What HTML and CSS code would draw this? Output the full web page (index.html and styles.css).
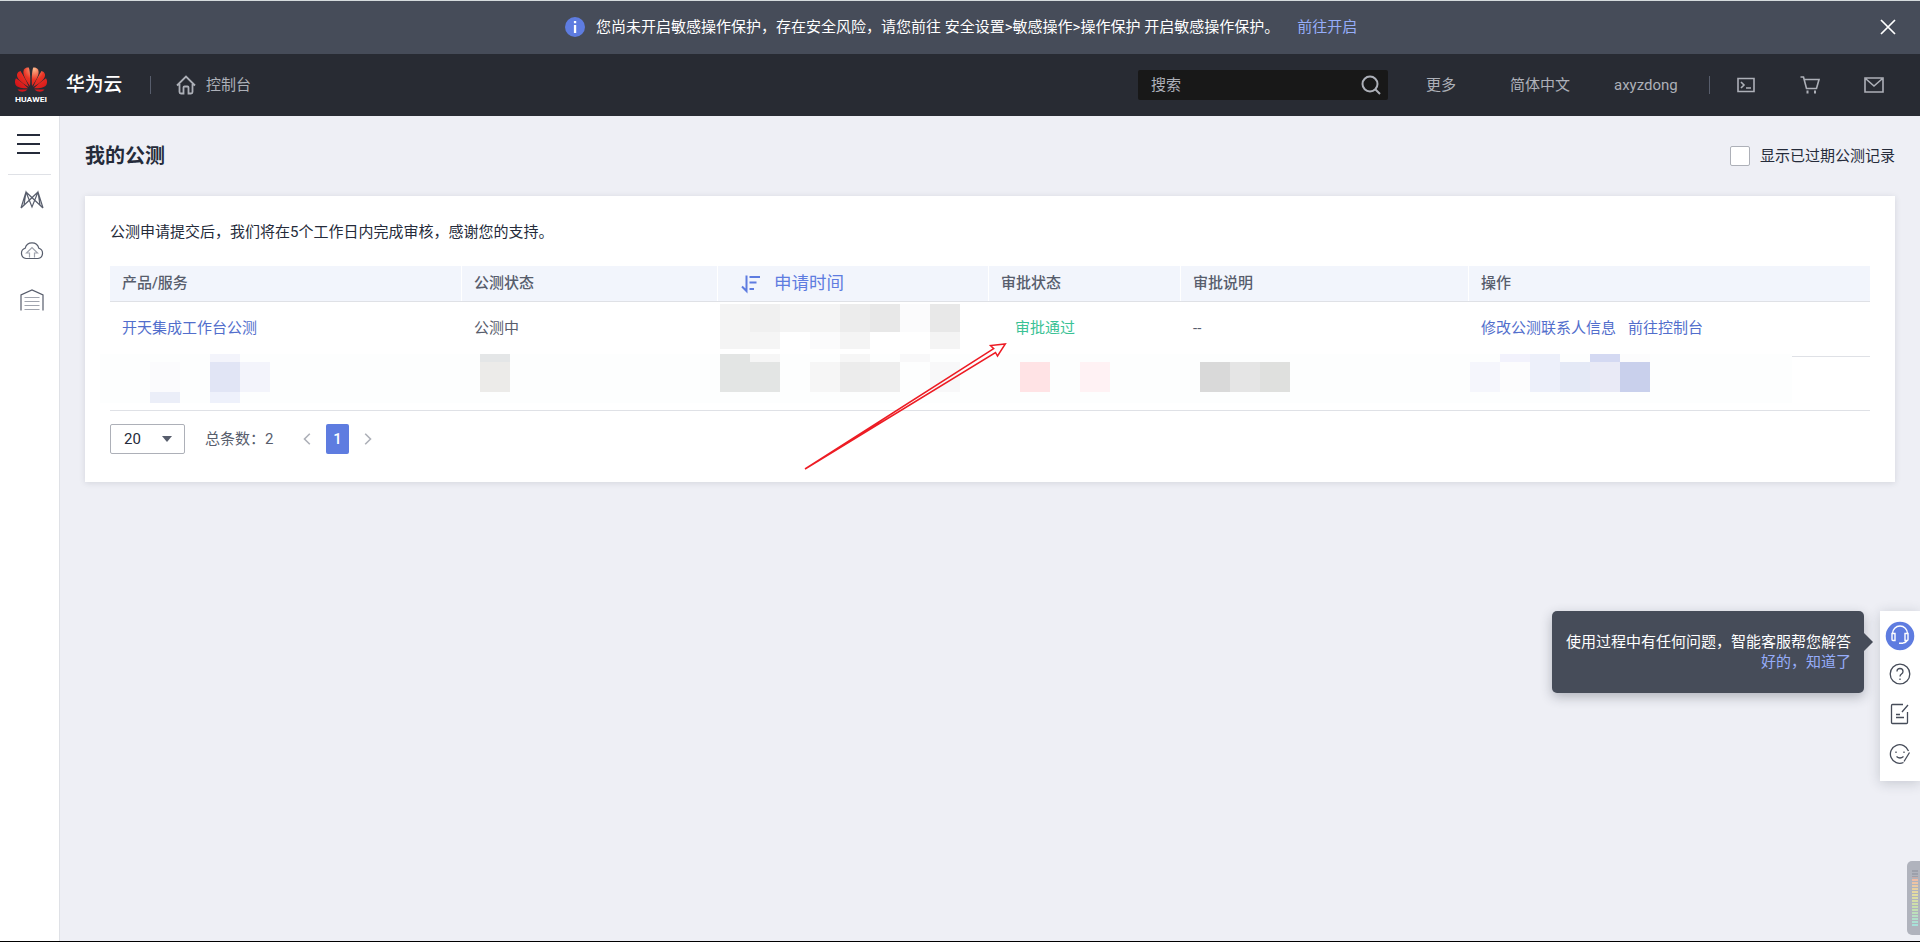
FILE: index.html
```html
<!DOCTYPE html>
<html lang="zh-CN">
<head>
<meta charset="utf-8">
<title>我的公测</title>
<link rel="stylesheet" href="styles.css">
</head>
<body>
<div class="page">
  <div class="notice">
    <svg class="notice-icon" viewBox="0 0 20 20"><circle cx="10" cy="10" r="10"/><path d="M8.9 4h2.3v2.3H8.9zM8.9 8h2.3v8H8.9z" fill="#fff"/></svg>
    <span class="notice-text">您尚未开启敏感操作保护，存在安全风险，请您前往 安全设置&gt;敏感操作&gt;操作保护 开启敏感操作保护。</span>
    <a class="notice-link">前往开启</a>
    <svg class="notice-close" viewBox="0 0 16 16"><path d="M1 1l14 14M15 1L1 15"/></svg>
  </div>
  <header class="header">
    <svg class="logo" viewBox="0 0 34 36">
      <defs><radialGradient id="petal" gradientUnits="userSpaceOnUse" cx="20" cy="2" r="24"><stop offset="0" stop-color="#fcb98c"/><stop offset=".45" stop-color="#ea3223"/><stop offset="1" stop-color="#d3141a"/></radialGradient></defs>
      <g fill="url(#petal)">
        <path d="M16 19C11 12 8 6 10 2.500C11.300.5 13.500.2 14.800.5C16.300 5 16.500 13 16 19z"/>
        <path d="M18 19C23 12 26 6 24 2.500C22.700.5 20.500.2 19.200.5C17.700 5 17.500 13 18 19z"/>
        <path d="M14.800 20C7 15.500 2.500 11.500 3 7.500C3.300 5.500 5 4.300 6.500 4C9 8 13 15 14.800 20z"/>
        <path d="M19.200 20C27 15.500 31.500 11.500 31 7.500C30.700 5.500 29 4.300 27.500 4C25 8 21 15 19.200 20z"/>
        <path d="M14 21.200C7 21.500 3 20.500 1.500 17.500C.5 15 1 12.800 2 11.200C6 14 11 18 14 21.200z"/>
        <path d="M20 21.200C27 21.500 31 20.500 32.500 17.500C33.500 15 33 12.800 32 11.200C28 14 23 18 20 21.200z"/>
        <path d="M13.500 22.500C10 25.500 6 25.500 3.500 22.500z"/>
        <path d="M20.500 22.500C24 25.500 28 25.500 30.500 22.500z"/>
      </g>
      <text x="17" y="34.500" text-anchor="middle" textLength="32" lengthAdjust="spacingAndGlyphs">HUAWEI</text>
    </svg>
    <span class="brand">华为云</span>
    <i class="divider"></i>
    <svg class="home" viewBox="0 0 20 20"><path d="M1 10.500L10 1.500l9 9M3.500 9v8q0 1.500 1.500 1.500h2.500v-6q0-1 1-1h3q1 0 1 1v6H15q1.500 0 1.500-1.500V9"/></svg>
    <span class="console">控制台</span>
    <div class="search"><span>搜索</span><svg viewBox="0 0 20 20"><circle cx="9" cy="9" r="7.500"/><path d="M14.500 14.500l4.500 4.500"/></svg></div>
    <span class="nav more">更多</span>
    <span class="nav lang">简体中文</span>
    <span class="nav user">axyzdong</span>
    <i class="divider user-divider"></i>
    <svg class="hicon term" viewBox="0 0 20 20"><path d="M2 3.500h16v13H2zM5 7l3 3-3 3M10 13h5"/></svg>
    <svg class="hicon cart" viewBox="0 0 20 20"><path d="M.5 2h3l3 11.500h10L19 4.500H4.500"/><path d="M6.500 17h2M14 17h2" stroke-width="2.800"/></svg>
    <svg class="hicon mail" viewBox="0 0 20 20"><path d="M1 3h18v14H1zM2 4l8 7 8-7"/></svg>
  </header>
  <div class="body">
    <nav class="side">
      <div class="burger"><i></i><i></i><i></i></div>
      <svg viewBox="0 0 24 24"><path d="M1 20L6 4l6 15 6-15 5 16M6 4l17 16M18 4L1 20M6 4l-2 13M18 4l2 13"/></svg>
      <svg viewBox="0 0 24 24"><path d="M6 20.500a5.300 5.300 0 0 1-.8-10.300 7 7 0 0 1 13.600 0A5.300 5.300 0 0 1 18 20.500z"/><path class="soft" d="M9.500 19.500v-4.500h-3l5.500-5.500 5.500 5.500h-3v4.500"/></svg>
      <svg viewBox="0 0 24 24"><path d="M1 22.500V7l11-5 11 5v15.500"/><path class="soft" d="M4.500 9.500h15M4.500 13.500h15M4.500 17.500h15M4.500 21.500h15"/></svg>
    </nav>
    <main class="main">
      <div class="heading"><h1>我的公测</h1><label class="expired"><i class="check"></i>显示已过期公测记录</label></div>
      <section class="card">
        <p class="intro">公测申请提交后，我们将在5个工作日内完成审核，感谢您的支持。</p>
        <div class="table">
          <div class="row thead">
            <span>产品/服务</span><span>公测状态</span>
            <span class="sort"><svg viewBox="0 0 20 20"><path d="M5.500 1.500V17L1 12.500M8.500 3H19M8.500 8.500h7M8.500 15h4.500"/></svg>申请时间</span>
            <span>审批状态</span><span>审批说明</span><span>操作</span>
          </div>
          <div class="row first"><span class="link">开天集成工作台公测</span><span>公测中</span><span></span><span class="pass">审批通过</span><span>--</span><span class="link ops"><a>修改公测联系人信息</a><a>前往控制台</a></span></div>
          <div class="row second"></div>
        </div>
        <div class="pager">
          <div class="size">20<i></i></div><span class="total">总条数：2</span>
          <svg class="chev" viewBox="0 0 8 12"><path d="M6.800.8L1.500 6l5.300 5.200"/></svg>
          <b class="current">1</b>
          <svg class="chev" viewBox="0 0 8 12"><path d="M1.200.8L6.500 6l-5.300 5.200"/></svg>
        </div>
        <svg class="overlay" viewBox="85 196 1810 286" shape-rendering="crispEdges">
          <path fill="#fdfefe" d="M100 354h1692v49H100z"/>
          <path fill="#fbfbfd" d="M150 362h30v30h-30z"/><path fill="#ebeef8" d="M150 392h30v11h-30z"/>
          <path fill="#f3f4fb" d="M210 354h30v8h-30zM240 362h30v30h-30z"/><path fill="#e1e5f5" d="M210 362h30v30h-30z"/><path fill="#eef1fb" d="M210 392h30v11h-30z"/>
          <path fill="#e4e6e7" d="M480 354h30v8h-30z"/><path fill="#ecebe9" d="M480 362h30v30h-30z"/>
          <path fill="#f4f4f4" d="M720 304h30v45h-30zM780 304h60v28h-60zM840 332h30v17h-30zM930 332h30v17h-30z"/>
          <path fill="#f0f0f0" d="M750 304h30v28h-30z"/><path fill="#f5f5f5" d="M750 332h30v17h-30z"/>
          <path fill="#ececec" d="M840 304h30v28h-30z"/><path fill="#e8e8e8" d="M870 304h30v28h-30zM930 304h30v28h-30z"/>
          <path fill="#fbfbfc" d="M900 304h30v28h-30zM810 332h30v17h-30z"/>
          <path fill="#e3e5e4" d="M720 354h30v38h-30zM750 362h30v30h-30z"/>
          <path fill="#f6f6f6" d="M750 354h30v8h-30zM840 354h30v8h-30zM810 362h30v30h-30z"/><path fill="#ececec" d="M840 362h30v30h-30z"/><path fill="#eee" d="M870 362h30v30h-30z"/>
          <path fill="#f8f8f9" d="M900 354h30v8h-30zM930 362h30v30h-30z"/>
          <path fill="#ffe3e5" d="M1020 362h30v30h-30z"/><path fill="#fff2f4" d="M1080 362h30v30h-30z"/>
          <path fill="#d9d9d9" d="M1200 362h30v30h-30z"/><path fill="#e5e5e5" d="M1230 362h30v30h-30z"/><path fill="#dfe0de" d="M1260 362h30v30h-30z"/>
          <path fill="#f5f6fc" d="M1470 362h30v30h-30z"/><path fill="#fcfcfd" d="M1500 362h30v30h-30zM1620 354h30v8h-30z"/><path fill="#f2f2fc" d="M1500 354h30v8h-30z"/><path fill="#edf0fa" d="M1530 354h30v38h-30z"/><path fill="#e4e9f6" d="M1560 362h30v30h-30z"/><path fill="#d4d9f2" d="M1590 354h30v8h-30z"/><path fill="#e9eaf6" d="M1590 362h30v30h-30z"/><path fill="#c9d0ec" d="M1620 362h30v30h-30z"/>
          <path class="arrow" shape-rendering="auto" d="M805 469L993.700 348.700L990.500 345.500L1005.300 344L997.500 356L995.500 352.500z"/>
        </svg>
      </section>
    </main>
  </div>
  <div class="tip"><p>使用过程中有任何问题，智能客服帮您解答</p><a>好的，知道了</a></div>
  <aside class="tools">
    <svg class="headset" viewBox="0 0 30 30"><circle cx="15" cy="15" r="15" fill="#5e7ce0"/><path d="M7.500 12.500a7.500 7.500 0 0 1 15 0M7 12.500h3v7H8q-1 0-1-1zM23 12.500h-3v7h2q1 0 1-1zM22 20q-2 2-4 2M14 22.300h4"/></svg>
    <svg viewBox="0 0 22 22"><circle cx="11" cy="11" r="9.800"/><path d="M8 8.500q0-3 3-3t3 3q0 1.500-1.500 2.500T11 13.500M11 15.500v1.500"/></svg>
    <svg viewBox="0 0 22 22"><path d="M14 1.500H3.500q-1 0-1 1v17q0 1 1 1h14q1 0 1-1V9M19 2l-6 7M7 11.500h4M7 14.500h8"/></svg>
    <svg viewBox="0 0 22 22"><path d="M14.500 19.500A9.300 9.300 0 1 1 19.500 8M20.500 9.500l-5.500 9M7.500 13.500q3.500 3 7 0M7 8.500v1.500M15 8.500v1.500"/></svg>
  </aside>
  <div class="meter"><i></i></div>
</div>
</body>
</html>
```
FILE: styles.css
```css
* { box-sizing: border-box; }
body { margin: 0; font: 15px/20px Roboto, "Noto Sans CJK SC", sans-serif; color: #252b3a; }
svg { display: block; flex: none; fill: none; }
.page { position: relative; width: 1920px; height: 942px; overflow: hidden; display: flex; flex-direction: column; background: #eeeff5; border-top: 1px solid #d5dbdd; border-bottom: 1px solid #000; }
.notice { height: 53px; flex: none; display: flex; align-items: center; padding: 0 24px 2px 565px; background: #464c59; color: #fff; white-space: nowrap; }
.notice-icon { width: 20px; height: 20px; margin-right: 11px; fill: #5e7ce0; }
.notice-link { margin-left: 18px; color: #96adfa; }
.notice-close { width: 16px; height: 16px; margin-left: auto; stroke: #fff; stroke-width: 1.7; }
.header { height: 62px; flex: none; display: flex; align-items: center; background: #282b33; color: #adb0b8; white-space: nowrap; }
.logo { width: 34px; height: 36px; margin-left: 14px; }
.logo text { font: bold 8px Roboto, sans-serif; fill: #fff; }
.brand { width: 58px; margin-left: 18px; font-size: 18.75px; font-weight: 500; color: #fff; }
.divider { width: 1px; height: 18px; margin-left: 26px; background: #575d6c; }
.home { width: 20px; height: 20px; margin-left: 25px; stroke: #adb0b8; stroke-width: 1.8; }
.console { margin-left: 10px; }
.search { width: 250px; height: 30px; margin-left: auto; padding: 0 7px 0 13px; display: flex; align-items: center; justify-content: space-between; border-radius: 2px; background: #181818; }
.search svg { width: 20px; height: 20px; stroke: #adb0b8; stroke-width: 2; }
.more { width: 84px; margin-left: 38px; }
.lang { width: 104px; }
.user { width: 69px; }
.user-divider { margin-left: 26px; }
.hicon { width: 20px; height: 20px; stroke: #adb0b8; stroke-width: 1.6; }
.term { margin-left: 26px; }
.cart { margin-left: 44px; }
.mail { margin-left: 44px; margin-right: 36px; }
.body { flex: 1; display: flex; min-height: 0; }
.side { width: 60px; flex: none; display: flex; flex-direction: column; align-items: center; background: #fff; border-right: 1px solid #dfe1e6; }
.side svg { width: 24px; height: 24px; margin: 13px 0 13px 4px; stroke: #575d6c; stroke-width: 1.2; }
.side .soft { stroke: #a0a4ae; }
.burger { width: 43px; height: 59px; padding: 18px 11px 0 9px; display: flex; flex-direction: column; gap: 7px; border-bottom: 1px solid #dfe1e6; }
.burger i { height: 2px; flex: none; background: #252b3a; }
.main { flex: 1; padding: 0 25px; }
.heading { height: 80px; display: flex; align-items: center; justify-content: space-between; }
h1 { margin: 0; font-size: 20px; line-height: 26px; }
.expired { display: flex; align-items: center; gap: 10px; }
.check { width: 20px; height: 20px; border: 1px solid #adb0b8; border-radius: 2px; background: #fff; }
.card { position: relative; height: 286px; padding: 26px 25px 0; background: #fff; box-shadow: 0 1px 6px rgba(37,43,58,.13); }
.intro { margin: 0; height: 44px; }
.row { display: grid; grid-template-columns: 352px 256px 271px 192px 288px 401px; align-items: center; color: #575d6c; border-bottom: 1px solid #dfe1e6; }
.row > span { padding-left: 12px; }
.thead { height: 36px; font-weight: 500; background: #f2f5fc; }
.thead > span { height: 35px; line-height: 35px; border-right: 1px solid #fff; }
.thead > span:last-child { border: 0; }
.thead > .sort { display: flex; align-items: center; padding-left: 23px; font-size: 17.5px; font-weight: 400; color: #5e7ce0; }
.sort svg { width: 20px; height: 20px; margin-right: 13px; stroke: #5e7ce0; stroke-width: 2; }
.first { height: 55px; padding-bottom: 2px; }
.second { height: 54px; }
.row .pass { padding-left: 26px; color: #3ac295; }
.link { color: #526ecc; }
.ops { display: flex; gap: 12px; }
.pager { display: flex; align-items: center; margin-top: 13px; color: #575d6c; }
.size { width: 75px; height: 30px; padding: 0 12px 0 13px; display: flex; align-items: center; justify-content: space-between; border: 1px solid #adb0b8; border-radius: 2px; color: #252b3a; }
.size i { border: 5px solid transparent; border-top: 6px solid #575d6c; border-bottom: 0; }
.total { width: 98px; margin-left: 20px; }
.chev { width: 8px; height: 12px; stroke: #adb0b8; stroke-width: 1.6; }
.current { width: 23px; height: 30px; margin: 0 15px; line-height: 30px; text-align: center; font-weight: 500; border-radius: 2px; color: #fff; background: #5e7ce0; }
.overlay { position: absolute; left: 0; top: 0; width: 1810px; height: 286px; }
.arrow { stroke: #ed1c24; stroke-width: 1.5; }
.tip { position: absolute; right: 56px; top: 610px; width: 312px; height: 82px; padding: 21px 13px; text-align: right; border-radius: 5px; background: #464c59; color: #fff; box-shadow: 0 4px 12px rgba(37,43,58,.3); white-space: nowrap; }
.tip p { margin: 0; }
.tip a { display: block; color: #96adfa; }
.tip::after { content: ""; position: absolute; left: 312px; top: 22px; border: 9px solid transparent; border-left-color: #464c59; border-right: 0; }
.tools { position: absolute; right: 0; top: 610px; width: 40px; height: 170px; padding-top: 10px; display: flex; flex-direction: column; align-items: center; background: #fff; box-shadow: 0 2px 12px rgba(37,43,58,.2); }
.tools svg { width: 22px; height: 22px; margin-bottom: 18px; stroke: #464c59; stroke-width: 1.3; }
.tools .headset { width: 30px; height: 30px; margin-bottom: 12px; stroke: #fff; stroke-width: 1.4; }
.meter { position: absolute; right: 0; top: 860px; width: 13px; height: 74px; padding: 9px 2px 8px 5px; border-radius: 5px 0 0 5px; background: #b0b3bd; }
.meter i { display: block; height: 57px; background: repeating-linear-gradient(transparent 0 2px, #b0b3bd 2px 3px), linear-gradient(#9da0ab 0 7px, #f0b8a6 8px, #e4dda1 24px, #c6dfae 38px, #a3e1df); }
```
